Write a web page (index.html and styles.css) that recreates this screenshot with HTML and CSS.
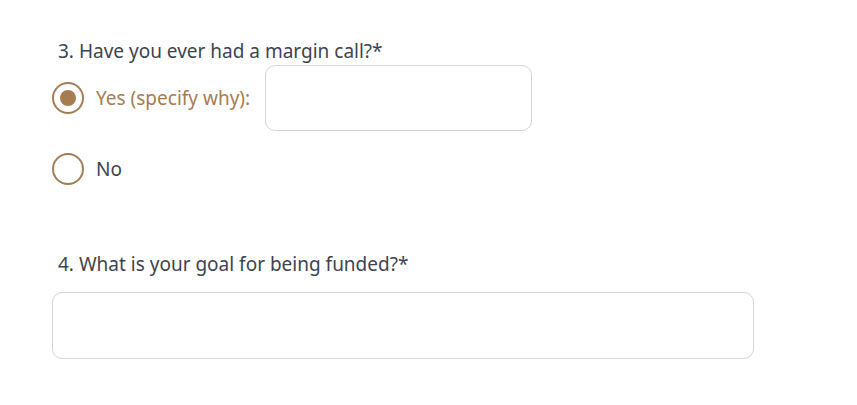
FILE: index.html
```html
<!DOCTYPE html>
<html lang="en">
<head>
<meta charset="utf-8">
<link rel="stylesheet" href="styles.css">
</head>
<body>
<form class="form">
  <div class="question q3">
    <div class="label">3. Have you ever had a margin call?*</div>
    <div class="option option-yes">
      <span class="radio checked"><span class="dot"></span></span>
      <span class="opt-text selected">Yes (specify why):</span>
      <div class="input small"></div>
    </div>
    <div class="option option-no">
      <span class="radio"></span>
      <span class="opt-text">No</span>
    </div>
  </div>
  <div class="question q4">
    <div class="label">4. What is your goal for being funded?*</div>
    <div class="input wide"></div>
  </div>
</form>
</body>
</html>
```

FILE: styles.css
```css
html, body {
  margin: 0;
  padding: 0;
  background: #ffffff;
}
body {
  font-family: "Noto Sans", "Open Sans", sans-serif;
  font-size: 19px;
  color: #3d4350;
  width: 857px;
  height: 405px;
  overflow: hidden;
}
.form {
  padding: 38px 0 0 52px;
}
.label {
  padding-left: 6px;
  line-height: 26px;
  height: 26px;
}
.option {
  display: flex;
  align-items: center;
}
.option-yes {
  margin-top: 1px;
  height: 66px;
}
.option-no {
  margin-top: 22px;
  height: 32px;
}
.radio {
  box-sizing: border-box;
  width: 32px;
  height: 32px;
  border: 2px solid #a67c52;
  border-radius: 50%;
  display: flex;
  align-items: center;
  justify-content: center;
  flex: none;
}
.dot {
  width: 16px;
  height: 16px;
  border-radius: 50%;
  background: #a67c52;
}
.opt-text {
  margin-left: 12px;
  line-height: 24px;
}
.opt-text.selected {
  color: #a67c52;
}
.input {
  box-sizing: border-box;
  border: 1px solid #d4d4d4;
  border-radius: 10px;
  height: 66px;
  background: #fff;
}
.input.small {
  width: 267px;
  margin-left: 15px;
}
.q4 {
  margin-top: 66px;
}
.input.wide {
  width: 702px;
  height: 67px;
  margin-top: 15px;
}
```
